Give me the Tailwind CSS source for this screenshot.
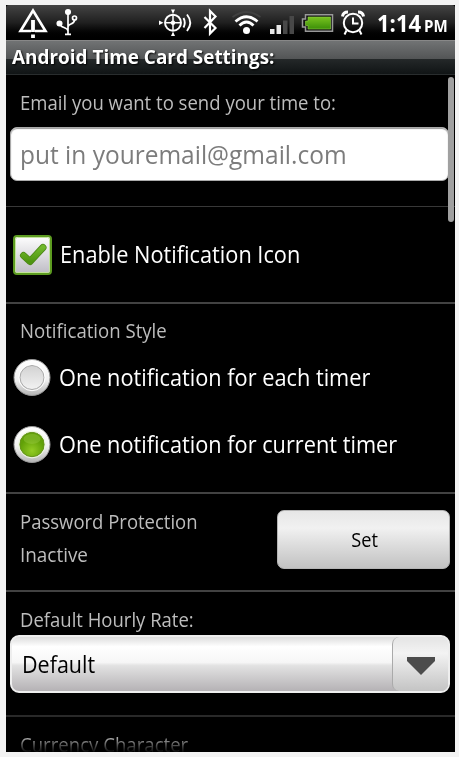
<!DOCTYPE html>
<html lang="en">
<head>
<meta charset="utf-8">
<title>Android Time Card Settings</title>
<script src="https://cdn.jsdelivr.net/npm/@tailwindcss/browser@4"></script>
</head>
<body class="h-[757px] w-[459px] overflow-hidden bg-[#f3f3f3] pt-[5px] pl-[6px] font-['Open_Sans','Noto_Sans',sans-serif]">
<main class="relative flex h-[747px] w-[449px] flex-col overflow-hidden bg-black whitespace-nowrap">
  <header class="flex h-[35px] shrink-0 items-center rounded-t-[3px] bg-linear-to-b from-[#444] via-[#202020] to-black">
    <svg class="h-[35px] w-[371px] shrink-0" viewBox="6 5 371 35" fill="none" stroke="#fff">
      <path d="M31 31H20.5L33 10.500L45.500 31H35" stroke-width="2.600"/>
      <path d="M33 20V32M33 34.500V38" stroke-width="3.800"/>
      <g stroke-width="1.700">
        <path d="M68 12V34M65 34.300H71M60 24C60 28 68 27 68 31M68 27C68 23 74.500 25 74.500 20"/>
        <circle cx="68" cy="12" r="2.200" fill="#fff"/><circle cx="59.500" cy="23.500" r="2.200" fill="#fff"/><circle cx="74.500" cy="18" r="2"/>
      </g>
      <g stroke-width="1.900">
        <circle cx="173" cy="22.700" r="8"/>
        <path d="M166 22.700H180M173 15V30" stroke-width="1.500"/>
        <circle cx="173" cy="22.700" r="2.200" fill="#fff" stroke="none"/>
        <path d="M173 14L171 9.500H175ZM173 31.500L171 36H175ZM163.500 22.700L159 20.500V24.900Z" fill="#fff" stroke="none"/>
        <path d="M183.500 18Q186 22.700 183.500 27.500M187 14.500Q193.500 22.700 187 31"/>
      </g>
      <path d="M204.500 17L215.500 28L210 33.500V11L215.500 16.500L204.500 28" stroke-width="2.200"/>
      <circle cx="246.500" cy="30.500" r="3.500" fill="#fff" stroke="none"/>
      <path d="M239.500 25.500Q246.500 18.500 253.500 25.500" stroke-width="2.800"/>
      <path d="M235.500 21.500Q246.500 12 257.500 21.500" stroke-width="2.800"/>
      <path d="M232.500 17Q246.500 7 260.500 17" stroke="#404040" stroke-width="1.800"/>
      <g stroke="none"><path d="M270 29H274.500V34H270ZM276.500 25H281V34H276.500Z" fill="#e8e8e8"/><path d="M283 20.500H287.500V34H283ZM289.500 16H294V34H289.500Z" fill="#484848"/></g>
      <path d="M305.500 14.700H332.500V31.300H305.500V27H302.500V19H305.500Z" stroke="#999" stroke-width="1.500" fill="#111"/>
      <path d="M308 17H330.500V29H308V25.500H305.500V21H308Z" fill="url(#battery)" stroke="#8ed044" stroke-width=".6"/>
      <g stroke-width="2">
        <circle cx="353" cy="23" r="9.200"/><path d="M353 17.500V23.500H358.500M346.500 30.500L344.500 34.500M359.500 30.500L361.500 34.500"/>
        <path d="M342.500 16.500Q343 12 348 12M363.500 16.500Q363 12 358 12" stroke-width="3"/>
      </g>
      <defs><linearGradient id="battery" x2="0" y2="1"><stop stop-color="#79c320"/><stop offset="1" stop-color="#3c8f08"/></linearGradient></defs>
    </svg>
    <div class="flex items-baseline font-bold text-white"><span class="w-[47px] origin-left scale-x-[.92] text-[24px]">1:14</span><span class="origin-left scale-x-[.94] text-[16px]">PM</span></div>
  </header>
  <h1 class="flex h-[35px] shrink-0 items-center border-t border-b border-t-[#888] border-b-[#292d2e] bg-[linear-gradient(#717374_0,#535556_54%,#242829_55%,#101415_100%)] pb-[1px] pl-[6px] text-[20px] font-bold text-white [text-shadow:1px_1px_2px_#000]"><span class="origin-left scale-x-[.946]">Android Time Card Settings:</span></h1>

  <section class="flex h-[132px] shrink-0 flex-col border-b border-[#383838] pl-[4px]">
    <label class="flex h-[52px] items-center pt-[4px] pl-[10px] text-[20px] text-[#bdbdbd]"><span class="origin-left scale-x-[.927]">Email you want to send your time to:</span></label>
    <div class="flex h-[54px] w-[439px] items-center rounded-[7px] border border-[#aaa] bg-white pt-px pl-[9px] text-[26px] text-[#7c7c7c] shadow-[inset_0_1px_1px_#999]"><span class="origin-left scale-x-[.942]">put in youremail@gmail.com</span></div>
  </section>

  <section class="flex h-[97px] shrink-0 items-center border-b-2 border-[#424242] pl-[7px] text-[23px] text-white">
    <svg class="mr-[7px] size-[40px] shrink-0" viewBox="0 0 40 40">
      <defs><linearGradient id="box" x2="0" y2="1"><stop stop-color="#fff"/><stop offset="1" stop-color="#bdbbc4"/></linearGradient><linearGradient id="tick" x2="0" y2="1"><stop stop-color="#70b82b"/><stop offset="1" stop-color="#4f9512"/></linearGradient></defs>
      <rect x="1" y="1" width="37" height="38" rx="3" fill="url(#box)" stroke="#5c9b20" stroke-width="2"/>
      <rect x="2.500" y="2.500" width="34" height="35" rx="2" fill="none" stroke="#c3e39b"/>
      <path d="M10.500 20.500L17 26.500L30 12.500" fill="none" stroke="#4b8517" stroke-width="7" stroke-linecap="round" stroke-linejoin="round"/>
      <path d="M10.500 20.500L17 26.500L30 12.500" fill="none" stroke="url(#tick)" stroke-width="5.500" stroke-linecap="round" stroke-linejoin="round"/>
    </svg>
    <span class="origin-left scale-x-[.945]">Enable Notification Icon</span>
  </section>

  <section class="flex h-[190px] shrink-0 flex-col border-b-2 border-[#424242] pl-[7px] text-[23px] text-white">
    <h2 class="flex h-[40px] items-center pt-[14px] pl-[7px] text-[20px] text-[#bdbdbd]"><span class="origin-left scale-x-[.93]">Notification Style</span></h2>
    <div class="flex h-[67px] items-center">
      <svg class="mr-[8px] size-[38px] shrink-0" viewBox="0 0 38 38">
        <defs><linearGradient id="ring" x2="0" y2="1"><stop stop-color="#fff"/><stop offset=".55" stop-color="#f2f2f2"/><stop offset="1" stop-color="#b4b4b4"/></linearGradient><linearGradient id="off" x2="0" y2="1"><stop stop-color="#d2d2d2"/><stop offset="1" stop-color="#f2f2f2"/></linearGradient><radialGradient id="on" cy=".75"><stop stop-color="#93cc24"/><stop offset="1" stop-color="#61a008"/></radialGradient></defs>
        <circle cx="19" cy="18.500" r="18" fill="url(#ring)" stroke="#999"/><circle cx="19" cy="18.500" r="12" fill="url(#off)" stroke="#aaa"/><circle cx="19" cy="18.500" r="13.200" fill="none" stroke="#fff"/>
      </svg>
      <span class="origin-left scale-x-[.945]">One notification for each timer</span>
    </div>
    <div class="flex h-[67px] items-center">
      <svg class="mr-[8px] size-[38px] shrink-0" viewBox="0 0 38 38">
        <circle cx="19" cy="18.500" r="18" fill="url(#ring)" stroke="#999"/><circle cx="19" cy="18.500" r="12.200" fill="url(#on)" stroke="#67951d"/><circle cx="19" cy="18.500" r="13.400" fill="none" stroke="#eef8dc"/><ellipse cx="19" cy="13" rx="8.500" ry="5" fill="#a4d14c" opacity=".35"/>
      </svg>
      <span class="origin-left scale-x-[.945]">One notification for current timer</span>
    </div>
  </section>

  <section class="flex h-[98px] shrink-0 items-center justify-between border-b-2 border-[#424242] pr-[5px] pb-[5px] pl-[14px]">
    <div class="pb-[4px] text-[20px] leading-[33px] text-[#bdbdbd]"><p><span class="inline-block origin-left scale-x-[.925]">Password Protection</span></p><p><span class="inline-block origin-left scale-x-[.945]">Inactive</span></p></div>
    <button class="flex h-[59px] w-[173px] items-center justify-center rounded-[7px] border border-[#b5b5b5] bg-linear-to-b from-[#e6e6e6] via-[#f1f1f1] via-30% to-[#c2c2c2] pl-[2px] text-[20px] text-black"><span class="scale-x-[.91]">Set</span></button>
  </section>

  <section class="flex h-[125px] shrink-0 flex-col border-b-2 border-[#292929] pl-[4px]">
    <h2 class="flex h-[43px] items-center pt-[12px] pl-[10px] text-[20px] text-[#bdbdbd]"><span class="origin-left scale-x-[.925]">Default Hourly Rate:</span></h2>
    <div class="flex h-[58px] w-[440px] items-stretch overflow-hidden rounded-[9px] border-2 border-[#eee] bg-[linear-gradient(#ddd_0,#fff_18%,#f6f6f6_47%,#e2e2e2_53%,#b5b2b5_100%)]">
      <div class="flex grow items-center pl-[10px] text-[23px] text-black"><span class="origin-left scale-x-[.935]">Default</span></div>
      <div class="flex w-[56px] items-center justify-center rounded-l-[7px] border-l border-[#aaa] bg-linear-to-b from-[#e4e4e4] via-[#f3f3f3] via-30% to-[#c4c4c4]"><svg class="mt-[3px] ml-px h-[18px] w-[28px]" viewBox="0 0 28 18"><path d="M0 0H28V4L14 18L0 4Z" fill="#4c4c4c"/></svg></div>
    </div>
  </section>
  <section class="h-[35px] shrink-0 overflow-hidden pt-[15px] pl-[14px] text-[20px] leading-[26px]"><span class="inline-block origin-left scale-x-[.93] bg-linear-to-b from-[#a8a8a8] from-25% to-black to-90% bg-clip-text text-transparent">Currency Character</span></section>
  <div class="absolute top-[72px] right-[1px] h-[145px] w-[6px] rounded-full bg-[#a0a0a0]"></div>
</main>
</body>
</html>
